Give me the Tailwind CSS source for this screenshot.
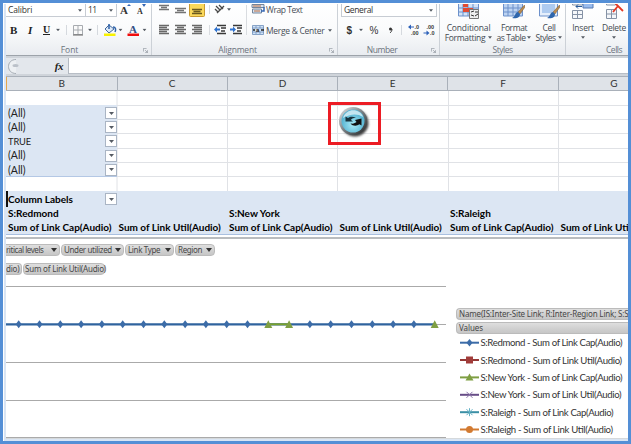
<!DOCTYPE html>
<html lang="en">
<head>
<meta charset="utf-8">
<title>Workbook</title>
<script src="https://cdn.jsdelivr.net/npm/@tailwindcss/browser@4"></script>
</head>
<body class="w-[631px] h-[444px] overflow-hidden bg-[#548fd6] font-['Open_Sans',sans-serif]">
<svg class="hidden">
  <defs>
    <symbol id="ar" viewBox="0 0 5 3"><path d="M0 0h5L2.5 3z" fill="#555b63"/></symbol>
    <symbol id="pa" viewBox="0 0 6 4"><path d="M0 0h6L3 4z" fill="#333"/></symbol>
    <symbol id="launch" viewBox="0 0 7 7"><path d="M.5 5V.5H5M3 3l3 3M6.5 3v3.5H3" fill="none" stroke="#8b929b"/></symbol>
    <symbol id="brush" viewBox="0 0 14 14"><path d="M13.5 0L7 7l2 2 5-7z" fill="#b98a4e" stroke="#775a37" stroke-width=".5"/><path d="M7 7c-3 0-2 4-6 6 4 1 8 0 8-4z" fill="#2f66ac"/></symbol>
    <symbol id="bd" viewBox="-5 -5 10 10"><path d="M0-4L3 0 0 4-3 0z" fill="#3c6ca8"/></symbol>
    <symbol id="gt" viewBox="-5 -5 10 10"><path d="M0-4L4 3.7H-4z" fill="#7f9f43"/></symbol>
  </defs>
</svg>
<main class="ml-[3px] mt-[3px] w-[625px] h-[438px] overflow-hidden bg-[#d9e5f4] border-l border-t border-white pl-[2px] flex flex-col">

  <!-- Ribbon -->
  <header class="flex h-[52px] shrink-0 bg-linear-to-b from-white via-[#fafbfc] to-[#e9ecf0] border-b border-[#9da3aa] text-[8.5px] text-[#444a52] whitespace-nowrap">
    <section class="w-[146px] shrink-0 border-r border-[#ccd1d7] flex flex-col">
      <div class="h-[13px] flex shrink-0">
        <div class="w-[80px] h-[13px] border-b border-r border-[#c7ccd3] bg-white flex items-center justify-between pl-[2px] pr-[3px] leading-none text-[#333]"><span class="tracking-[-0.15px]">Calibri</span><svg class="w-[4px] h-[3px]"><use href="#ar"/></svg></div>
        <div class="w-[31px] h-[13px] border-b border-r border-[#c7ccd3] bg-white flex items-center justify-between pl-[2px] pr-[3px] leading-none text-[#333]"><span class="tracking-[-0.5px]">11</span><svg class="w-[4px] h-[3px]"><use href="#ar"/></svg></div>
        <svg class="w-[34px] h-[13px]" font-family="Liberation Serif" font-weight="bold" fill="#333"><text x="3" y="10" font-size="11">A</text><path d="M10 2l2-2 2 2zM25 0h4l-2 3z" fill="#3467b4"/><text x="20" y="10" font-size="8">A</text></svg>
      </div>
      <svg class="w-[145px] h-[26px] shrink-0" viewBox="6 17 145 26" font-family="Liberation Serif" font-weight="bold" fill="#222">
        <text x="10" y="34" font-size="11">B</text><text x="28" y="34" font-size="11" font-style="italic">I</text><text x="43" y="33" font-size="10">U</text><path d="M43 34.5h7" stroke="#222"/>
        <use href="#ar" x="56" y="28.5" width="4" height="3"/><path d="M66.500 25v10M97.500 25v10" stroke="#d5d9de"/>
        <path d="M73.500 25.500h9v9h-9zM78 25v9M73 30h10" fill="#fafafa" stroke="#a7abb0"/><path d="M73 35h10" stroke="#666"/>
        <use href="#ar" x="88" y="28.500" width="4" height="3"/>
        <path d="M105 29l4-4 5 4-5 4z" fill="#dce9f8" stroke="#42689c"/><path d="M109 24v5M113 27c3 0 3 3 2 5" stroke="#2e62a9" stroke-width="1.500" fill="none"/><path d="M104 33.500h11.500v2.500H104z" fill="#f8f200"/>
        <use href="#ar" x="118.500" y="28.500" width="4" height="3"/>
        <text x="129" y="33" font-size="11" fill="#334f85">A</text><path d="M127.500 33.500H139V36h-11.500z" fill="#f00d0d"/>
        <use href="#ar" x="142.500" y="28.500" width="4" height="3"/>
      </svg>
      <div class="h-[13px] relative text-center leading-[13px] text-[#6c737d] pr-[18px]">Font<svg class="absolute right-[3px] top-[5px] w-[5px] h-[5px]"><use href="#launch"/></svg></div>
    </section>

    <section class="w-[186px] shrink-0 border-r border-[#ccd1d7] flex flex-col">
      <div class="flex h-[39px] shrink-0">
        <svg class="w-[113px] h-[39px] shrink-0" viewBox="152 4 113 39">
          <path d="M159 5.500h10M161 7.500h6M159 9.500h10M175 8.500h11M177 10.500h7M175 12.500h11" stroke="#747474" stroke-width="1.600"/>
          <rect x="189.500" y="2" width="15" height="14.500" rx="1" fill="#fbd95b" stroke="#c89a31"/><path d="M192 9.500h10M193.500 11.500h7M192 13.500h10" stroke="#6b5a1f" stroke-width="1.600"/>
          <path d="M209.500 5v9M209.500 25v10M246.500 5v30" stroke="#d9dce0"/>
          <path d="M217 13l7-7M216 6l4 4M215 9l3 3M219 5l4 4" stroke="#484848" stroke-width="1.300"/>
          <use href="#ar" x="227" y="8" width="4" height="3"/>
          <path d="M159 25.500h10M159 27.500h8M159 29.500h10M159 31.500h8M159 33.500h10M175 25.500h11M177 27.500h7M175 29.500h11M177 31.500h7M175 33.500h11M192 25.500h10M194 27.500h8M192 29.500h10M194 31.500h8M192 33.500h10" stroke="#686868" stroke-width="1.400"/>
          <path d="M217 25.500h9M221 28h5M221 31h4M217 33.500h9M233 25.500h9M237 28h5M237 31h4M233 33.500h9" stroke="#393939" stroke-width="1.500"/>
          <path d="M214 29.500l3-3v2h3v2h-3v2zM236 29.500l-3-3v2h-3v2h3v2z" fill="#2e72cf"/>
          <path d="M252 4.500h12v3h-12zM252.500 9h9v4h-9z" fill="#d6e5f5" stroke="#75859a"/><path d="M253 6h8M254 11h6" stroke="#bd6b3b"/><path d="M264 7v4h-3" stroke="#3467b4" stroke-width="1.500" fill="none"/>
          <path d="M252.500 25.500h11v9h-11zM252 28h12M252 32h12M256 26v2M260 26v2M256 32v2M260 32v2" fill="#cfe2f7" stroke="#6f8fba" stroke-width=".8"/><path d="M253 30h2M261 30h3" stroke="#222" stroke-width="1.500"/><text x="256" y="32" font-size="6" font-weight="bold" font-family="Liberation Sans" fill="#222">a</text>
        </svg>
        <div class="flex flex-col text-[#484e57] pl-px">
          <span class="h-[12px] leading-[11px] tracking-[-0.45px]">Wrap Text</span>
          <span class="mt-[8px] h-[13px] leading-[13px] flex items-center gap-[4px] tracking-[-0.3px]">Merge &amp; Center<svg class="w-[4px] h-[3px]"><use href="#ar"/></svg></span>
        </div>
      </div>
      <div class="h-[13px] relative text-center leading-[13px] text-[#6c737d] pr-[14px] tracking-[-0.2px]">Alignment<svg class="absolute right-[3px] top-[5px] w-[5px] h-[5px]"><use href="#launch"/></svg></div>
    </section>

    <section class="w-[102px] shrink-0 border-r border-[#ccd1d7] flex flex-col">
      <div class="ml-[3px] w-[96px] h-[13px] shrink-0 border-b border-x border-[#c7ccd3] bg-white flex items-center justify-between pl-[2px] pr-[3px] leading-none text-[#333]"><span class="tracking-[-0.35px]">General</span><svg class="w-[4px] h-[3px]"><use href="#ar"/></svg></div>
      <svg class="w-[101px] h-[26px] shrink-0" viewBox="338 17 101 26" font-family="Liberation Sans" fill="#333">
        <text x="346.500" y="34" font-size="10" font-weight="bold">$</text><use href="#ar" x="359" y="28.500" width="4" height="3"/><text x="369.500" y="34" font-size="10">%</text><circle cx="390.500" cy="29" r="1.500"/><path d="M392 29c0 2-1 3-2 4" stroke="#333" fill="none"/>
        <path d="M401.500 25v10" stroke="#d5d9de"/>
        <g font-size="5.500" font-weight="bold"><text x="414.500" y="28.500">.0</text><text x="411" y="35">.00</text><text x="426.500" y="28.500">.00</text><text x="430" y="35">.0</text></g>
        <path d="M408 27l3-2.500v2h3v1h-3v2zM429.500 33l-3-2.500v2h-3v1h3v2z" fill="#2e62b9"/>
      </svg>
      <div class="h-[13px] relative text-center leading-[13px] text-[#6c737d] pr-[13px] tracking-[-0.4px]">Number<svg class="absolute right-[3px] top-[5px] w-[5px] h-[5px]"><use href="#launch"/></svg></div>
    </section>

    <section class="w-[126px] shrink-0 border-r border-[#ccd1d7] flex flex-col">
      <div class="h-[39px] shrink-0 flex leading-[9.5px] text-center">
        <div class="w-[54px] pl-[3px] flex flex-col items-center">
          <svg class="w-[24px] h-[19px] shrink-0" viewBox="0 0 24 19"><path d="M1.500-1h20v13h-20zM1 4h20M1 8h20M6 0v12M11 0v12M16 0v12" fill="#d4e4f8" stroke="#6d91cb"/><path d="M6 0h5v3H6zM6 4h10v4H6z" fill="#e14b33"/><path d="M12.500 5.500h9v9h-9z" fill="#eee" stroke="#777"/><path d="M14 8l3-1M18 8h3M14 11l3 1M18 12l3-2" stroke="#333"/></svg>
          <span class="tracking-[-0.15px]">Conditional</span><span class="flex items-center gap-[3px] tracking-[-0.3px]">Formatting<svg class="w-[4px] h-[3px]"><use href="#ar"/></svg></span>
        </div>
        <div class="w-[38px] ml-px flex flex-col items-center">
          <svg class="w-[24px] h-[19px] shrink-0" viewBox="0 0 24 19"><path d="M1.500-1h19v13h-19zM1 4h19M1 8h19M6 0v12M11 0v12M16 0v12" fill="#bcd3f2" stroke="#6d91cb"/><use href="#brush" x="9" y="1" width="14" height="14"/></svg>
          <span class="tracking-[-0.4px]">Format</span><span class="flex items-center gap-[2px] tracking-[-0.45px]">as Table<svg class="w-[4px] h-[3px]"><use href="#ar"/></svg></span>
        </div>
        <div class="w-[32px] flex flex-col items-center">
          <svg class="w-[24px] h-[19px] shrink-0" viewBox="0 0 24 19"><path d="M2.500-1h18v13h-18z" fill="#e5effc" stroke="#6d91cb"/><path d="M5 0h13v9H5z" fill="#aecbf0"/><use href="#brush" x="9" y="1" width="14" height="14"/></svg>
          <span class="tracking-[-0.3px]">Cell</span><span class="flex items-center gap-[3px] tracking-[-0.5px]">Styles<svg class="w-[4px] h-[3px]"><use href="#ar"/></svg></span>
        </div>
      </div>
      <div class="h-[13px] text-center leading-[13px] text-[#6c737d] tracking-[-0.5px]">Styles</div>
    </section>

    <section class="w-[62px] shrink-0 flex flex-col overflow-hidden">
      <div class="h-[39px] shrink-0 flex leading-[9.5px]">
        <div class="w-[34px] flex flex-col items-center">
          <svg class="w-[24px] h-[19px] shrink-0" viewBox="0 0 24 19"><path d="M1.500 6.500h10v8h-10zM1 10.500h10M6.500 6v8M1.500-3v4h10v-4" fill="#f5f7fa" stroke="#8592a5"/><path d="M12-1h10v5H12z" fill="#9abced" stroke="#577ab2"/><path d="M5 2.500h6M5 2.500l2-2M5 2.500l2 2" stroke="#285a99"/></svg>
          <span class="tracking-[-0.2px]">Insert</span><svg class="w-[4px] h-[3px] mt-[3px]"><use href="#ar"/></svg>
        </div>
        <div class="w-[28px] flex flex-col items-center">
          <svg class="w-[24px] h-[19px] shrink-0" viewBox="0 0 24 19"><path d="M4.500 5.500h10v9h-10zM4 10h10M9.500 5v9M4.500-3v4h9v-4" fill="#f5f7fa" stroke="#8592a5"/><path d="M11 8l5-6 5 5M13-1l6 6" stroke="#e33823" stroke-width="1.800" fill="none"/></svg>
          <span class="tracking-[-0.3px]">Delete</span><svg class="w-[4px] h-[3px] mt-[3px]"><use href="#ar"/></svg>
        </div>
      </div>
      <div class="h-[13px] pl-[40px] leading-[13px] text-[#6c737d] tracking-[-0.5px]">Cells</div>
    </section>
  </header>

  <!-- Formula bar -->
  <div class="h-[20px] shrink-0 flex bg-[#e3e7ec] border-t-[2px] border-b-[2px] border-[#cfd4da]">
    <div class="w-[63px] flex items-center justify-between border-r border-[#b3b9c1]">
      <svg class="w-[22px] h-[15px]" viewBox="0 0 22 15"><path d="M10 .5C0 .5 0 14.500 10 14.500" fill="#edf0f3" stroke="#a5acb4"/><ellipse cx="9.500" cy="6.500" rx="3" ry="1.500" fill="#bbc1c9"/></svg>
      <span class="pr-[5px] font-['Liberation_Serif',serif] italic font-bold text-[11px] tracking-[-0.5px] leading-none text-[#222]">fx</span>
    </div>
    <div class="flex-1 bg-white border-b border-[#b8bec6]"></div>
  </div>

  <!-- Column headers -->
  <div class="h-[15px] shrink-0 flex bg-[#dfe3e8] border-y border-[#a9b0b9] font-[Lato,sans-serif] text-[10px] leading-[13px] text-center text-[#333]">
    <div class="w-[111.500px] shrink-0 border-r border-[#a9b0b9] border-l border-l-[#e5a64d]">B</div>
    <div class="w-[110.300px] shrink-0 border-r border-[#a9b0b9]">C</div>
    <div class="w-[110.300px] shrink-0 border-r border-[#a9b0b9]">D</div>
    <div class="w-[110.300px] shrink-0 border-r border-[#a9b0b9]">E</div>
    <div class="w-[110.300px] shrink-0 border-r border-[#a9b0b9]">F</div>
    <div class="w-[110.300px] shrink-0">G</div>
  </div>

  <!-- Cell grid -->
  <div class="relative h-[146px] shrink-0 bg-white font-[Lato,sans-serif] text-[10.5px] text-[#222] whitespace-nowrap overflow-hidden">
    <svg class="absolute inset-0 w-[622px] h-[100px]" viewBox="6 91 622 100"><path d="M6 105.500h622M6 119.500h622M6 133.500h622M6 148.500h622M6 162.500h622M6 176.500h622M117 91v100M227.500 91v100M337.500 91v100M448.500 91v100M558.500 91v100" stroke="#e0e2e6"/></svg>
    <div class="relative mt-[14px] w-[111px] h-[72px] bg-[#dce6f3] border-b border-[#b4c8e5] flex flex-col pt-px">
      <div class="h-[14.200px] shrink-0 flex items-center justify-between pl-[2px]"><span class="leading-none">(All)</span><span class="w-[12px] h-[12px] border border-[#aab5c4] bg-white flex items-center justify-center"><svg class="w-[5px] h-[3px]"><use href="#ar"/></svg></span></div>
      <div class="h-[14.200px] shrink-0 flex items-center justify-between pl-[2px]"><span class="leading-none">(All)</span><span class="w-[12px] h-[12px] border border-[#aab5c4] bg-white flex items-center justify-center"><svg class="w-[5px] h-[3px]"><use href="#ar"/></svg></span></div>
      <div class="h-[14.200px] shrink-0 flex items-center justify-between pl-[2px]"><span class="leading-none text-[9.3px] tracking-[-0.1px]">TRUE</span><span class="w-[12px] h-[12px] border border-[#aab5c4] bg-white flex items-center justify-center"><svg class="w-[5px] h-[3px]"><use href="#ar"/></svg></span></div>
      <div class="h-[14.200px] shrink-0 flex items-center justify-between pl-[2px]"><span class="leading-none">(All)</span><span class="w-[12px] h-[12px] border border-[#aab5c4] bg-white flex items-center justify-center"><svg class="w-[5px] h-[3px]"><use href="#ar"/></svg></span></div>
      <div class="h-[14.200px] shrink-0 flex items-center justify-between pl-[2px]"><span class="leading-none">(All)</span><span class="w-[12px] h-[12px] border border-[#aab5c4] bg-white flex items-center justify-center"><svg class="w-[5px] h-[3px]"><use href="#ar"/></svg></span></div>
    </div>
    <div class="relative mt-[14px] h-[44px] bg-[#dce6f3] border-b border-[#a9c0e0] font-bold text-[10px] text-black pt-[1px]">
      <span class="absolute left-0 top-0 w-[2px] h-[16px] bg-[#111]"></span>
      <div class="h-[14px] w-[111px] pl-[2px] flex items-center justify-between"><span class="leading-none">Column Labels</span><span class="w-[12px] h-[12px] border border-[#aab5c4] bg-white flex items-center justify-center"><svg class="w-[5px] h-[3px]"><use href="#ar"/></svg></span></div>
      <div class="h-[14px] leading-[14px] flex pl-[2px]"><span class="w-[221px] shrink-0">S:Redmond</span><span class="w-[221px] shrink-0">S:New York</span><span>S:Raleigh</span></div>
      <div class="h-[14px] leading-[14px] flex pl-[2px]"><span class="w-[110.500px] shrink-0">Sum of Link Cap(Audio)</span><span class="w-[110.500px] shrink-0">Sum of Link Util(Audio)</span><span class="w-[110.500px] shrink-0">Sum of Link Cap(Audio)</span><span class="w-[110.500px] shrink-0">Sum of Link Util(Audio)</span><span class="w-[110.500px] shrink-0">Sum of Link Cap(Audio)</span><span class="shrink-0">Sum of Link Uti</span></div>
    </div>
    <!-- Refresh button in a highlight frame, floating over the cells -->
    <svg class="absolute left-[321px] top-[10px] w-[55px] h-[46px]" viewBox="327 101 55 46">
      <defs><linearGradient id="ring" x2="1" y2="1"><stop stop-color="#e7eaec"/><stop offset=".5" stop-color="#777f84"/><stop offset="1" stop-color="#222"/></linearGradient><radialGradient id="face" cy=".65"><stop stop-color="#a9ebf8"/><stop offset="1" stop-color="#58b5d3"/></radialGradient><filter id="soft"><feGaussianBlur stdDeviation="1"/></filter></defs>
      <rect x="329.500" y="103.500" width="50" height="40" fill="#fff" stroke="#ec1c24" stroke-width="3"/>
      <path d="M337.500 105v37M331 105.500h47M331 119.500h47M331 133.500h47" stroke="#e4e6e9"/>
      <circle cx="355" cy="123" r="13.500" fill="#444" filter="url(#soft)"/><circle cx="353" cy="121" r="14" fill="url(#ring)"/><circle cx="353" cy="121" r="11.500" fill="url(#face)"/><path d="M343 118c3-10 17-10 20-1-6-4-13-3-20 1z" fill="#e8f6fa" opacity=".75"/>
      <path d="M345.500 116.500l2.500 1.500c2-1.500 5-1.500 8-.5-3 .5-5 1.500-5 2.500l2 1.500h-7.500z" fill="#17323c"/><path d="M350.500 123.500c3 .5 5-.5 6-1.500l-1.500-2 6.500-1.500v7l-2-1.200c-3 2.200-7 1.700-9-.8z" fill="#111"/>
    </svg>
  </div>

  <!-- Pivot chart -->
  <div class="relative h-[202px] shrink-0 bg-white border-t-2 border-[#b9bcbf] text-[8px] text-[#484848] whitespace-nowrap overflow-hidden font-['Noto_Sans',sans-serif]">
    <svg class="absolute inset-0 w-[622px] h-[200px]" viewBox="6 239 622 200">
      <path d="M6 286.500h440M6 324.500h440M6 362.500h440M6 400.500h440M6 437.500h440" stroke="#aaa"/>
      <path d="M6 324.300h428" stroke="#2f639e" stroke-width="2.200"/><path d="M268 324.300h21" stroke="#78a12d" stroke-width="2"/>
      <g id="markers"></g>
    </svg>
    <div class="relative flex gap-px h-[12px] mt-[5px] leading-[10px] tracking-[-0.35px]">
      <div class="w-[54px] border border-l-0 border-[#bbb] bg-linear-to-b from-[#dedede] to-[#c6c6c6] rounded-r-[4px] flex items-center justify-between pr-[2px]"><span class="tracking-[-0.45px]">ritical levels</span><svg class="w-[6px] h-[4px] shrink-0"><use href="#pa"/></svg></div>
      <div class="w-[63px] border border-[#bbb] bg-linear-to-b from-[#dedede] to-[#c6c6c6] rounded-[4px] flex items-center justify-between px-[2px]"><span>Under utilized</span><svg class="w-[6px] h-[4px] shrink-0"><use href="#pa"/></svg></div>
      <div class="w-[49px] border border-[#bbb] bg-linear-to-b from-[#dedede] to-[#c6c6c6] rounded-[4px] flex items-center justify-between px-[2px]"><span>Link Type</span><svg class="w-[6px] h-[4px] shrink-0"><use href="#pa"/></svg></div>
      <div class="w-[40px] border border-[#bbb] bg-linear-to-b from-[#dedede] to-[#c6c6c6] rounded-[4px] flex items-center justify-between px-[2px]"><span>Region</span><svg class="w-[6px] h-[4px] shrink-0"><use href="#pa"/></svg></div>
    </div>
    <div class="relative flex gap-px h-[12px] mt-[7px] leading-[10px] tracking-[-0.2px]">
      <div class="w-[16px] border border-l-0 border-[#bbb] bg-linear-to-b from-[#dedede] to-[#c6c6c6] rounded-r-[4px]">dio)</div>
      <div class="w-[82px] border border-[#bbb] bg-linear-to-b from-[#dedede] to-[#c6c6c6] rounded-[4px] pl-px">Sum of Link Util(Audio)</div>
    </div>
    <div class="relative ml-[450px] mt-[33px] flex flex-col gap-[2px] leading-[10px]">
      <div class="h-[12px] border border-r-0 border-[#bbb] bg-linear-to-b from-[#dedede] to-[#c6c6c6] rounded-l-[4px] pl-[2px] overflow-hidden tracking-[-0.17px]">Name(IS:Inter-Site Link; R:Inter-Region Link; S:S</div>
      <div class="h-[12px] border border-r-0 border-[#bbb] bg-linear-to-b from-[#dedede] to-[#c6c6c6] rounded-l-[4px] pl-[2px] tracking-[-0.1px]">Values</div>
    </div>
    <svg class="absolute left-[450px] top-[95px] w-[172px] h-[105px]" viewBox="456 334 172 105" font-family="Lato" font-size="9.6" fill="#333">
      <g stroke-width="2"><path d="M460 342.700h19" stroke="#3c6ca8"/><path d="M460 360h19" stroke="#943735"/><path d="M460 377.400h19" stroke="#7f9f43"/><path d="M460 394.800h19" stroke="#674d87"/><path d="M460 412.200h19" stroke="#3a8fa5"/><path d="M460 429.500h19" stroke="#d27a31"/></g>
      <path d="M469.500 339l3 3.700-3 3.700-3-3.700z" fill="#3c6ca8"/><path d="M466 356.500h7v7h-7z" fill="#a13c3a"/><path d="M469.500 373.500l4 7h-8z" fill="#7f9f43"/><path d="M466.500 391.800l6 6m0-6l-6 6" stroke="#8a73a8"/><path d="M466.500 409.200l6 6m0-6l-6 6m3-7v8" stroke="#62b0c4"/><circle cx="469.500" cy="429.500" r="3.500" fill="#d27a31"/>
      <text x="480.500" y="346.200" textLength="142">S:Redmond - Sum of Link Cap(Audio)</text>
      <text x="480.500" y="363.500" textLength="141.500">S:Redmond - Sum of Link Util(Audio)</text>
      <text x="480.500" y="380.900" textLength="142">S:New York - Sum of Link Cap(Audio)</text>
      <text x="480.500" y="398.200" textLength="141">S:New York - Sum of Link Util(Audio)</text>
      <text x="480.500" y="415.600" textLength="133">S:Raleigh - Sum of Link Cap(Audio)</text>
      <text x="480.500" y="433" textLength="132.500">S:Raleigh - Sum of Link Util(Audio)</text>
    </svg>
    <div class="absolute inset-x-0 bottom-0 h-px bg-[#d5d9dc]"></div>
  </div>
</main>
<script>
  // One marker per sample; samples 12, 13 and 20 belong to the New York series.
  const green = [12, 13, 20];
  let out = '';
  for (let i = 0; i <= 20; i++) {
    out += `<use href="#${green.includes(i) ? 'gt' : 'bd'}" x="${13.7 + 20.8 * i}" y="319.3" width="10" height="10"/>`;
  }
  document.getElementById('markers').innerHTML = out;
</script>
</body>
</html>
